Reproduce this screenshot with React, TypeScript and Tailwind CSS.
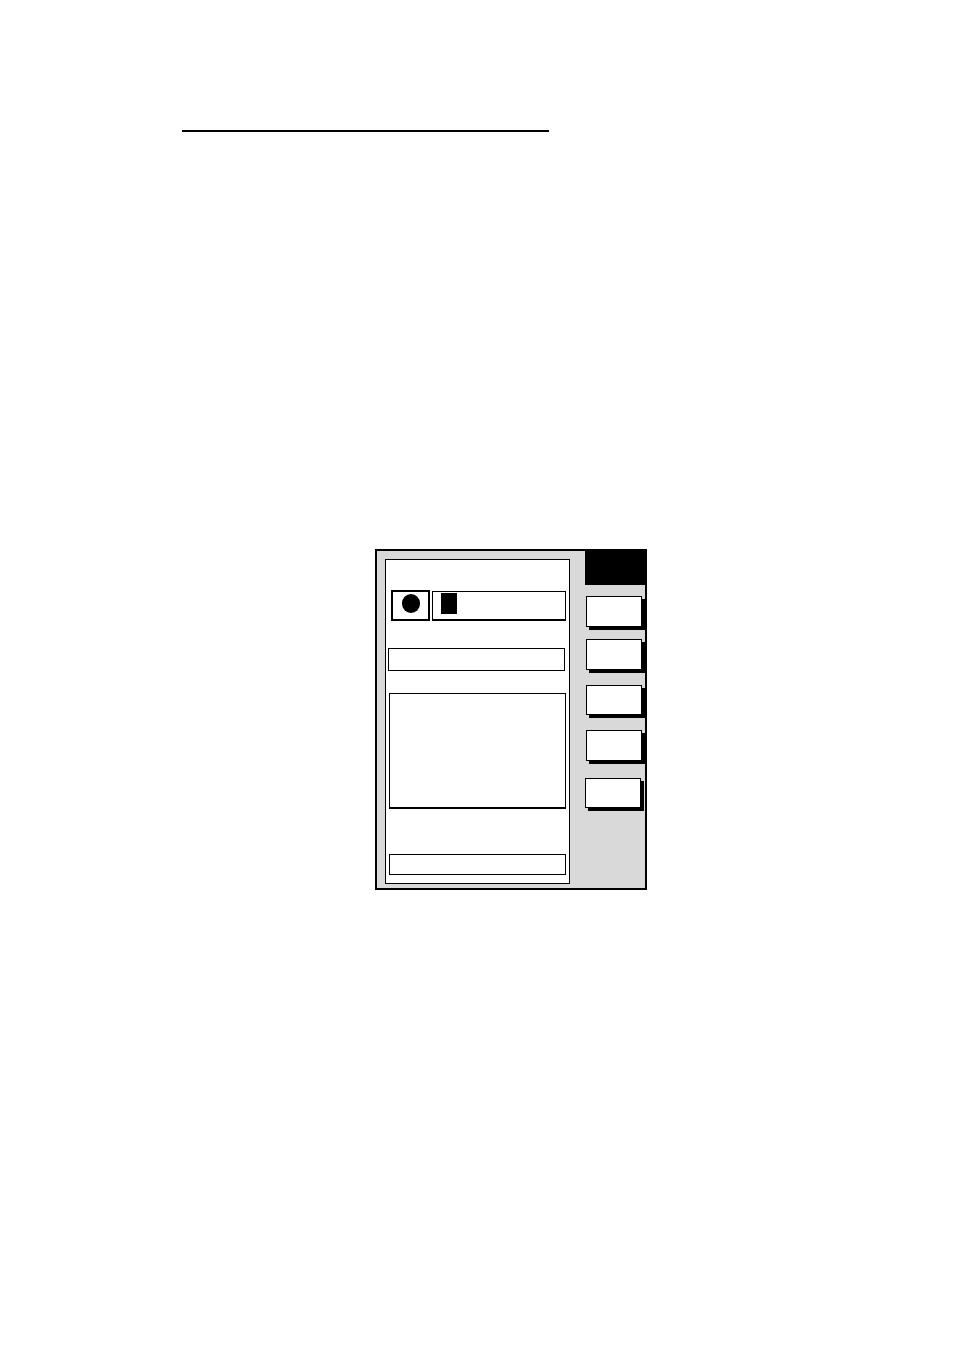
export default function App() {
  return (
    <div className="w-[954px] h-[1350px] bg-white relative">
      {/* Header rule */}
      <div className="pt-[130px] pl-[182px]">
        <div className="w-[367px] h-[2px] bg-black" />
      </div>

      {/* Screen frame */}
      <div className="ml-[375px] mt-[417px] w-[272px] h-[341px] border-2 border-black bg-[#d9d9d9] flex">
        {/* Main panel */}
        <div className="ml-[8px] mt-[8px] w-[185px] h-[325px] border border-black bg-white flex flex-col">
          <div className="mt-[30px] ml-[5px] flex">
            <div className="w-[39px] h-[31px] border-2 border-black flex justify-center">
              <div className="mt-[2px] w-[18px] h-[19px] rounded-full bg-black" />
            </div>
            <div className="ml-[2px] mt-[1px] w-[134px] h-[30px] border border-b-2 border-black pl-[8px] pt-[1px]">
              <div className="w-[16px] h-[21px] bg-black" />
            </div>
          </div>
          <div className="mt-[27px] ml-[2px] w-[177px] h-[23px] border border-black" />
          <div className="mt-[22px] ml-[3px] w-[177px] h-[116px] border border-b-2 border-black" />
          <div className="mt-[45px] ml-[3px] w-[177px] h-[21px] border border-black" />
        </div>

        {/* Soft keys */}
        <div className="ml-[15px] -mt-[2px] flex-1 flex flex-col">
          <div className="h-[36px] -mr-[2px] bg-black" />
          <div className="mt-[11px] ml-[1px] w-[56px] h-[31px] border border-black bg-white shadow-[3px_3px_0_#000]" />
          <div className="mt-[12px] ml-[1px] w-[56px] h-[31px] border border-black bg-white shadow-[3px_3px_0_#000]" />
          <div className="mt-[15px] ml-[1px] w-[56px] h-[30px] border border-black bg-white shadow-[3px_3px_0_#000]" />
          <div className="mt-[15px] ml-[1px] w-[56px] h-[31px] border border-black bg-white shadow-[3px_3px_0_#000]" />
          <div className="mt-[17px] w-[56px] h-[30px] border border-black bg-white shadow-[3px_3px_0_#000]" />
        </div>
      </div>
    </div>
  );
}
